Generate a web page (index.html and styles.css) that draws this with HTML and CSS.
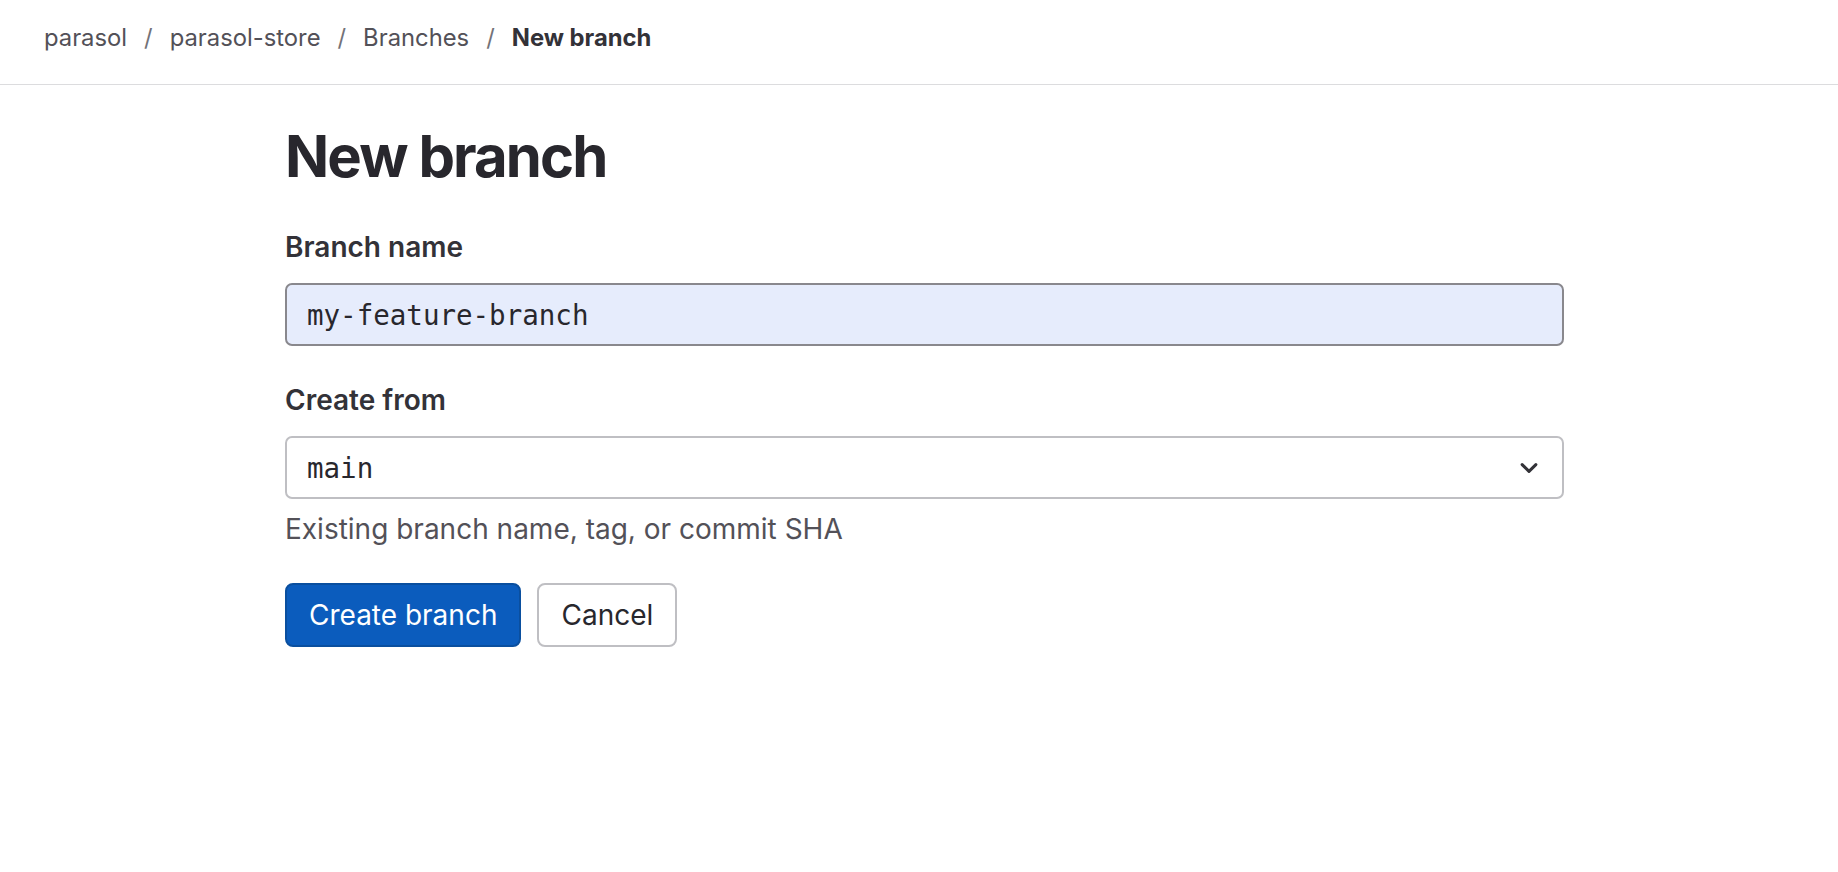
FILE: index.html
```html
<!DOCTYPE html>
<html lang="en">
<head>
<meta charset="utf-8">
<title>New branch</title>
<link rel="stylesheet" href="styles.css">
</head>
<body>
<header class="topbar">
  <nav class="crumbs">
    <a class="crumb" href="#">parasol</a>
    <span class="sep">/</span>
    <a class="crumb" href="#">parasol-store</a>
    <span class="sep">/</span>
    <a class="crumb" href="#">Branches</a>
    <span class="sep">/</span>
    <span class="crumb current">New branch</span>
  </nav>
</header>
<main class="page">
  <h1 class="title">New branch</h1>
  <form class="form">
    <div class="field">
      <label class="label" for="branch">Branch name</label>
      <input class="input filled" id="branch" type="text" value="my-feature-branch">
    </div>
    <div class="field">
      <label class="label" for="ref">Create from</label>
      <div class="select">
        <span class="select-value">main</span>
        <svg class="chevron" width="16" height="16" viewBox="0 0 16 16" aria-hidden="true"><path d="M3 5.5l5 5 5-5" fill="none" stroke="#333238" stroke-width="2.2" stroke-linecap="round" stroke-linejoin="round"/></svg>
      </div>
      <p class="help">Existing branch name, tag, or commit SHA</p>
    </div>
    <div class="actions">
      <button class="btn primary" type="button">Create branch</button>
      <button class="btn" type="button">Cancel</button>
    </div>
  </form>
</main>
</body>
</html>
```
FILE: styles.css
```css
* { box-sizing: border-box; }
body {
  margin: 0;
  background: #ffffff;
  font-family: Inter, "Noto Sans", sans-serif;
  color: #333238;
}
.topbar {
  height: 85px;
  border-bottom: 1px solid #dcdcde;
  display: flex;
  align-items: center;
  padding-left: 44px;
  padding-bottom: 10px;
}
.crumbs {
  display: flex;
  align-items: center;
  gap: 17px;
  font-size: 23.8px;
}
.crumb {
  color: #535158;
  text-decoration: none;
}
.crumb.current {
  color: #333238;
  font-weight: 700;
}
.sep {
  color: #737278;
}
.page {
  margin-left: 285px;
  width: 1279px;
}
.title {
  margin: 36px 0 0;
  font-size: 58px;
  line-height: 70px;
  font-weight: 700;
  color: #28272d;
  letter-spacing: -1.9px;
}
.form {
  display: flex;
  flex-direction: column;
}
.field {
  display: flex;
  flex-direction: column;
  margin-top: 36px;
}
.field + .field {
  margin-top: 34px;
}
.label {
  font-size: 28px;
  line-height: 40px;
  font-weight: 600;
  color: #333238;
  margin-bottom: 16px;
}
.input {
  height: 63px;
  border: 2px solid #89888d;
  border-radius: 7px;
  padding: 0 20px;
  font-family: "DejaVu Sans Mono", "Liberation Mono", monospace;
  font-size: 27.5px;
  color: #28272d;
  outline: none;
}
.input.filled {
  background: #e6ecfc;
}
.select {
  height: 63px;
  border: 2px solid #bfbfc3;
  border-radius: 7px;
  padding: 0 22px 0 20px;
  display: flex;
  align-items: center;
  justify-content: space-between;
}
.select-value {
  font-family: "DejaVu Sans Mono", "Liberation Mono", monospace;
  font-size: 27.5px;
  color: #28272d;
}
.chevron {
  width: 22px;
  height: 22px;
}
.help {
  margin: 10px 0 0;
  font-size: 28px;
  line-height: 40px;
  color: #535158;
}
.actions {
  display: flex;
  gap: 16px;
  margin-top: 34px;
}
.btn {
  height: 64px;
  padding: 0 22px;
  border: 2px solid #bfbfc3;
  border-radius: 8px;
  background: #ffffff;
  font-family: Inter, "Noto Sans", sans-serif;
  font-size: 28px;
  color: #28272d;
}
.btn.primary {
  background: #0b5cbd;
  border-color: #0a4f9f;
  color: #ffffff;
}
```
